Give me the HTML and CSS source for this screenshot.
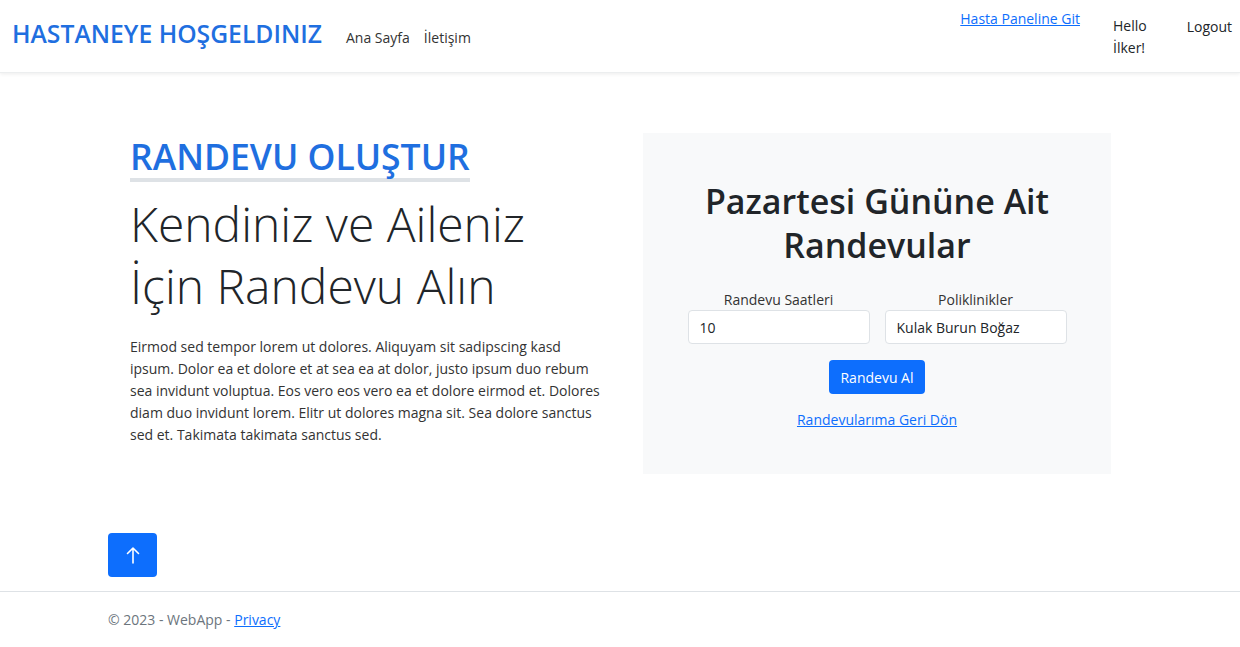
FILE: index.html
```html
<!DOCTYPE html>
<html lang="tr">
<head>
<meta charset="utf-8">
<title>Randevu</title>
<link rel="stylesheet" href="styles.css">
</head>
<body>
<header class="navbar">
  <div class="nav-left">
    <a class="brand" href="#">HASTANEYE HOŞGELDINIZ</a>
    <nav class="nav-links">
      <a href="#">Ana Sayfa</a>
      <a href="#">İletişim</a>
    </nav>
  </div>
  <div class="nav-right">
    <a class="panel-link" href="#">Hasta Paneline Git</a>
    <span class="hello">Hello<br>İlker!</span>
    <a class="logout" href="#">Logout</a>
  </div>
</header>

<main class="container">
  <div class="row">
    <section class="col-left">
      <h2 class="section-title">RANDEVU OLUŞTUR</h2>
      <h1 class="hero">Kendiniz ve Aileniz İçin Randevu Alın</h1>
      <p class="lead">Eirmod sed tempor lorem ut dolores. Aliquyam sit sadipscing kasd ipsum. Dolor ea et dolore et at sea ea at dolor, justo ipsum duo rebum sea invidunt voluptua. Eos vero eos vero ea et dolore eirmod et. Dolores diam duo invidunt lorem. Elitr ut dolores magna sit. Sea dolore sanctus sed et. Takimata takimata sanctus sed.</p>
    </section>
    <section class="col-right">
      <div class="card">
        <h3 class="card-title">Pazartesi Gününe Ait Randevular</h3>
        <div class="fields">
          <label class="field">
            <span class="field-label">Randevu Saatleri</span>
            <span class="input">10</span>
          </label>
          <label class="field">
            <span class="field-label">Poliklinikler</span>
            <span class="input">Kulak Burun Boğaz</span>
          </label>
        </div>
        <button class="btn-primary" type="button">Randevu Al</button>
        <a class="back-link" href="#">Randevularıma Geri Dön</a>
      </div>
    </section>
  </div>
  <button class="up-btn" type="button" aria-label="Yukarı">
    <svg width="14" height="18" viewBox="0 0 14 18" fill="none" stroke="#fff" stroke-width="1.6" stroke-linecap="round" stroke-linejoin="round"><path d="M7 17V2M1.5 7.5L7 2l5.5 5.5"/></svg>
  </button>
</main>

<footer class="footer">
  <div class="footer-inner">© 2023 - WebApp - <a href="#">Privacy</a></div>
</footer>
</body>
</html>
```
FILE: styles.css
```css
* { box-sizing: border-box; }
html, body { margin: 0; padding: 0; }
body {
  font-family: "Open Sans", "Noto Sans", sans-serif;
  color: #212529;
  background: #fff;
  font-size: 14px;
}
a { color: #0d6efd; }

.navbar {
  height: 73px;
  display: flex;
  justify-content: space-between;
  align-items: flex-start;
  padding: 0 8px 0 12px;
  background: #fff;
  box-shadow: 0 1px 4px rgba(0,0,0,0.08);
  border-bottom: 1px solid #eceeef;
}
.nav-left {
  display: flex;
  align-items: center;
  height: 66px;
}
.brand {
  font-size: 24.7px;
  font-weight: 600;
  color: #1f6fe0;
  text-decoration: none;
  margin-right: 24px;
}
.nav-links { display: flex; gap: 14px; padding-top: 8px; }
.nav-links a { color: #333; text-decoration: none; font-size: 14px; }
.nav-right {
  display: flex;
  align-items: flex-start;
  padding-top: 9px;
  font-size: 14px;
}
.panel-link { margin-right: 33px; line-height: 20px; }
.hello { line-height: 22px; margin-top: 6px; color: #212529; margin-right: 40px; }
.logout { color: #212529; text-decoration: none; margin-top: 8px; }

.container {
  width: 1024px;
  margin: 0 auto;
  padding-top: 60px;
  min-height: 518px;
}
.row { display: flex; }
.col-left { flex: 0 0 512px; padding: 0 14px 0 22px; }
.col-right { flex: 0 0 512px; padding: 0 21px 0 23px; }

.section-title {
  display: inline-block;
  margin: 1px 0 0;
  font-size: 35.5px;
  font-weight: 600;
  color: #1f6fe0;
  line-height: 44px;
  border-bottom: 4px solid #dee2e6;
}
.hero {
  margin: 11px 0 0;
  font-size: 48px;
  font-weight: 300;
  line-height: 62px;
  color: #212529;
}
.lead {
  margin: 19px 0 0;
  font-size: 14px;
  line-height: 22px;
  color: #333;
}

.card {
  background: #f8f9fa;
  height: 341px;
  padding: 46px 44px 0;
  display: flex;
  flex-direction: column;
  align-items: center;
}
.card-title {
  margin: 0;
  text-align: center;
  font-size: 34px;
  font-weight: 600;
  line-height: 44px;
  color: #212529;
}
.fields {
  margin-top: 23px;
  display: flex;
  gap: 15px;
}
.field { display: flex; flex-direction: column; align-items: center; }
.field-label { font-size: 14px; line-height: 20px; color: #333; }
.input {
  width: 182px;
  height: 34px;
  background: #fff;
  border: 1px solid #dee2e6;
  border-radius: 4px;
  padding: 0 11px;
  display: flex;
  align-items: center;
  font-size: 14px;
  color: #212529;
}
.btn-primary {
  margin-top: 16px;
  height: 34px;
  padding: 0 11px;
  background: #0d6efd;
  color: #fff;
  border: none;
  border-radius: 4px;
  font-family: inherit;
  font-size: 14px;
}
.back-link { margin-top: 16px; font-size: 14px; }

.up-btn {
  margin-top: 59px;
  width: 49px;
  height: 44px;
  background: #0d6efd;
  border: none;
  border-radius: 4px;
  display: flex;
  align-items: center;
  justify-content: center;
}

.footer {
  border-top: 1px solid #dee2e6;
}
.footer-inner {
  width: 1024px;
  margin: 0 auto;
  padding-top: 18px;
  font-size: 14px;
  color: #6c757d;
  line-height: 20px;
}
```
